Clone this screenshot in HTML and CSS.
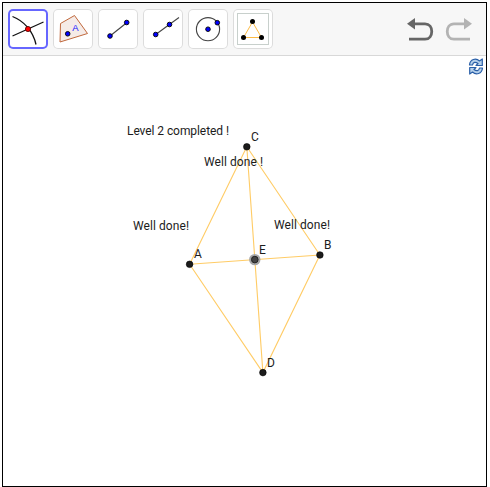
FILE: index.html
```
<!DOCTYPE html>
<html lang="en">
<head>
<meta charset="utf-8">
<title>Geometry</title>
<link rel="stylesheet" href="styles.css">
</head>
<body>
<div class="app">
  <header class="toolbar">
    <div class="tools">
      <button class="tool selected" aria-label="Intersect"><svg viewBox="0 0 40 40">
        <path class="curve" d="M4.500 7.500C16 12 25 22 28 35.500M4.500 27L35.500 13"/>
        <circle cx="20" cy="20" r="2.600" fill="#f00" stroke="#400" stroke-width=".8"/></svg></button>
      <button class="tool" aria-label="Polygon"><svg viewBox="0 0 40 40">
        <path d="M7.500 14.500L21.500 6.500L34.500 24.500L7 33Z" fill="#f5ebe7" stroke="#c0683c" stroke-width="1"/>
        <circle class="blue" cx="14.700" cy="24.800" r="2.300"/>
        <text class="tool-letter" x="19.300" y="21.800">A</text></svg></button>
      <button class="tool" aria-label="Segment"><svg viewBox="0 0 40 40">
        <path class="thin" d="M12 27L29 13.500"/>
        <circle class="blue" cx="12" cy="27" r="2.300"/><circle class="blue" cx="28.700" cy="13.500" r="2.300"/></svg></button>
      <button class="tool" aria-label="Ray"><svg viewBox="0 0 40 40">
        <path class="thin" d="M12.700 25.500L36 8.500"/>
        <circle class="blue" cx="12.700" cy="25.500" r="2.300"/><circle class="blue" cx="26.500" cy="15.500" r="2.300"/></svg></button>
      <button class="tool" aria-label="Circle"><svg viewBox="0 0 40 40">
        <circle class="thin" cx="20" cy="20.200" r="11.600"/>
        <circle class="blue" cx="20" cy="20.200" r="2.300"/><circle class="blue" cx="29.300" cy="13.700" r="2.300"/></svg></button>
      <button class="tool" aria-label="Triangle"><svg viewBox="0 0 40 40">
        <rect x="4.500" y="4.500" width="31" height="31" fill="#fff" stroke="#c8d0cc"/>
        <path d="M19.500 13L10.500 28.500H28.500Z" fill="none" stroke="#fdbb45" stroke-width="1"/>
        <g fill="#000"><circle cx="19.500" cy="12.500" r="2.500"/><circle cx="10.500" cy="28.500" r="2.500"/><circle cx="28.500" cy="28.500" r="2.500"/></g></svg></button>
    </div>
    <div class="history">
      <svg class="undo" viewBox="0 0 28 24"><path class="arrow" d="M3 21.200H19C28 21.200 28 5.800 19 5.800H7"/><path class="head" d="M1 5.800L9 0V11.600Z"/></svg>
      <svg class="redo" viewBox="0 0 28 24"><path class="arrow" d="M3 21.200H19C28 21.200 28 5.800 19 5.800H7"/><path class="head" d="M1 5.800L9 0V11.600Z"/></svg>
    </div>
  </header>
  <main class="canvas">
    <svg class="figure" viewBox="3 56 483 430">
      <path class="edges" d="M246.800 146.800L189.600 264.300L262.900 372.600L319.900 255L246.800 146.800L262.900 372.600M189.600 264.300L319.900 255"/>
      <circle cx="254.800" cy="259.600" r="5.700" fill="#a6a6a6"/>
      <g class="points"><circle cx="246.800" cy="146.800" r="3.300"/><circle cx="189.600" cy="264.300" r="3.300"/><circle cx="319.900" cy="255" r="3.300"/><circle cx="262.900" cy="372.600" r="3.300"/><circle class="crossing" cx="254.800" cy="259.600" r="3.300"/></g>
      <g class="labels">
        <text x="127" y="135" textLength="102">Level 2 completed !</text>
        <text x="204" y="166" textLength="59">Well done !</text>
        <text x="133" y="230" textLength="56">Well done!</text>
        <text x="274" y="229" textLength="56">Well done!</text>
        <text x="251" y="141">C</text>
        <text x="194" y="258">A</text>
        <text x="259" y="254">E</text>
        <text x="324" y="249">B</text>
        <text x="267" y="367">D</text>
      </g>
    </svg>
    <svg class="reset" viewBox="0 0 16 17">
      <g fill="#b5d0ea" stroke="#2a5fa8" stroke-width="1.200" stroke-linejoin="round">
        <path d="M1.500 7C2 1 8 -.3 11.500 3L14.300 1V7.500H8L10 5.500C7.500 3.500 5 4 4.500 7Z"/>
        <path d="M14.500 10C14 16 8 17.300 4.500 14L1.700 16V9.500H8L6 11.500C8.500 13.500 11 13 11.500 10Z"/>
      </g>
    </svg>
  </main>
</div>
</body>
</html>
```
FILE: styles.css
```
* { box-sizing: border-box; }
body { margin: 0; background: #fff; overflow: hidden; font-family: Roboto, sans-serif; }
.app { width: 485px; height: 485px; margin: 2px; border: 1px solid #000; display: flex; flex-direction: column; }
.toolbar { height: 53px; flex: none; display: flex; justify-content: space-between; background: #f7f7f7; border-bottom: 1px solid #d8d8d8; padding: 6px 13px 0 5px; }
.tools { display: flex; gap: 5px; }
.tool { width: 40px; height: 40px; padding: 0; border: 0; border-radius: 5px; background: #fff; box-shadow: inset 0 0 0 1px #dcdcdc; }
.tool.selected { box-shadow: inset 0 0 0 2px #6666ff; }
.tool svg { display: block; width: 40px; height: 40px; }
.curve { fill: none; stroke: #111; stroke-width: 1.3; }
.thin { fill: none; stroke: #444; stroke-width: 1.1; }
.blue { fill: #00f; stroke: #000; stroke-width: .9; }
.tool-letter { font: 9.500px "Liberation Sans", sans-serif; fill: #11f; }
.history { display: flex; gap: 11px; padding-top: 9px; }
.history svg { width: 28px; height: 24px; }
.arrow { fill: none; stroke: currentColor; stroke-width: 2.8; }
.head { fill: currentColor; }
.undo { color: #666; }
.redo { color: #b3b3b3; transform: scaleX(-1); }
.canvas { flex: 1; min-height: 0; position: relative; }
.figure { display: block; width: 483px; height: 430px; }
.edges { fill: none; stroke: #fc6; stroke-width: 1.1; }
.points circle { fill: #1c1c1c; stroke: #000; stroke-width: .6; }
.points .crossing { fill: #444; stroke: #222; stroke-width: 1; }
.labels { font-size: 12px; fill: #1c1c1c; }
.reset { position: absolute; top: 2px; right: 2px; width: 16px; height: 17px; }
```
